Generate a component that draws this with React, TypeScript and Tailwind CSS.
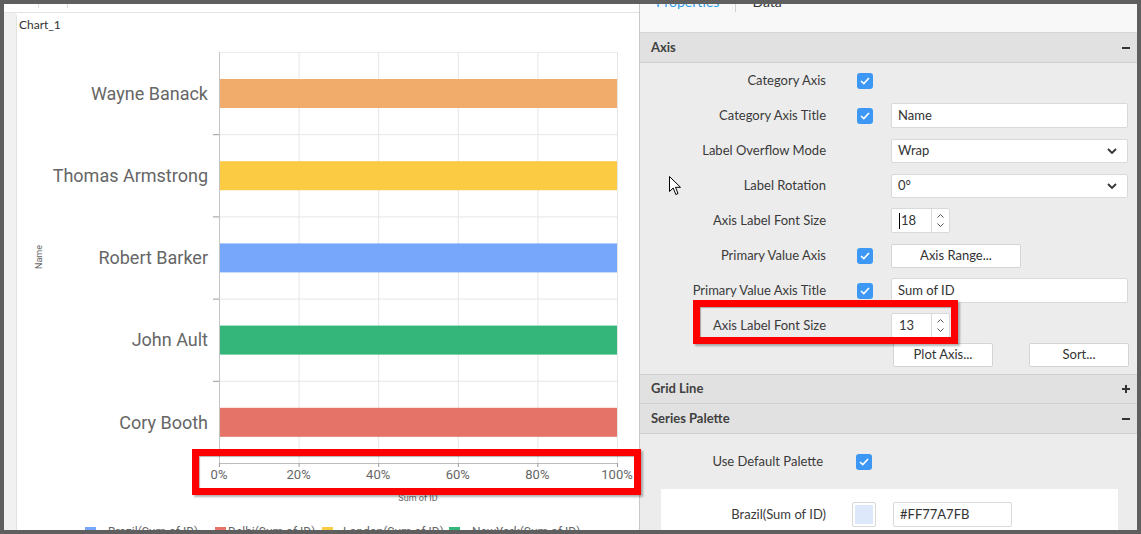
import React from 'react'

const panelFont = { fontFamily: 'Lato, "Noto Sans", sans-serif' }

const bars = [
  { name: 'Wayne Banack', color: '#F1AB6B' },
  { name: 'Thomas Armstrong', color: '#FBCB43' },
  { name: 'Robert Barker', color: '#77A7FB' },
  { name: 'John Ault', color: '#34B67A' },
  { name: 'Cory Booth', color: '#E57368' },
]

const legend = [
  { name: 'Brazil(Sum of ID)', color: '#77A7FB', x: 85, tx: 108 },
  { name: 'Delhi(Sum of ID)', color: '#E57368', x: 215, tx: 228 },
  { name: 'London(Sum of ID)', color: '#FBCB43', x: 322, tx: 343 },
  { name: 'NewYork(Sum of ID)', color: '#34B67A', x: 449, tx: 472 },
]

function Chart() {
  const left = 219
  const right = 617
  const top = 52
  const band = 82.2
  const step = (right - left) / 5
  return (
    <svg width="622" height="493" className="block">
      <g transform="translate(-17,-37)" style={{ fontFamily: 'Roboto, sans-serif' }}>
        <line x1={left} y1={top + 0.5} x2={right} y2={top + 0.5} stroke="#ececec" />
        {[0, 1, 2, 3, 4, 5].map((i) => (
          <line key={i} x1={left + i * step + 0.5} y1={top} x2={left + i * step + 0.5} y2={463} stroke="#e6e6e6" />
        ))}
        {[1, 2, 3, 4].map((i) => (
          <g key={i}>
            <line x1={left} y1={top + i * band + 0.5} x2={right} y2={top + i * band + 0.5} stroke="#e6e6e6" />
            <line x1={213} y1={top + i * band + 0.5} x2={left} y2={top + i * band + 0.5} stroke="#9a9a9a" />
          </g>
        ))}
        {bars.map((b, i) => (
          <g key={b.name}>
            <rect x={left} y={top + i * band + 27} width={right - left} height={29} fill={b.color} />
            <text x={208} y={top + i * band + 43} textAnchor="end" dominantBaseline="middle" fontSize="18" fill="#666">
              {b.name}
            </text>
          </g>
        ))}
        <line x1={left + 0.5} y1={top} x2={left + 0.5} y2={463} stroke="#c4c4c4" />
        <line x1={left} y1={463.5} x2={right} y2={463.5} stroke="#bdbdbd" />
        {[0, 1, 2, 3, 4, 5].map((i) => (
          <g key={i}>
            <line x1={left + i * step + 0.5} y1={463} x2={left + i * step + 0.5} y2={467} stroke="#9a9a9a" />
            <text x={left + i * step} y={476} textAnchor="middle" dominantBaseline="middle" fontSize="13" fill="#666">
              {i * 20}%
            </text>
          </g>
        ))}
        <text x={418} y={499} textAnchor="middle" dominantBaseline="middle" fontSize="9" fill="#666">
          Sum of ID
        </text>
        <text x={40} y={257} textAnchor="middle" dominantBaseline="middle" fontSize="9" fill="#666" transform="rotate(-90 40 257)">
          Name
        </text>
        {legend.map((l) => (
          <g key={l.name}>
            <rect x={l.x} y={527} width={11} height={11} fill={l.color} />
            <text x={l.tx} y={527} dominantBaseline="hanging" fontSize="12" fill="#666">
              {l.name}
            </text>
          </g>
        ))}
      </g>
    </svg>
  )
}

function Check() {
  return (
    <div className="w-[16px] h-[16px] rounded-[3px] bg-[#3d97f5] flex items-center justify-center">
      <svg width="10" height="8" viewBox="0 0 10 8">
        <path d="M1 4 L3.8 6.6 L9 1" fill="none" stroke="white" strokeWidth="1.6" />
      </svg>
    </div>
  )
}

function Header({ title, sign, top }: { title: string; sign: 'minus' | 'plus'; top?: boolean }) {
  return (
    <div
      className={`h-[30px] bg-[#e1e1e1] border-b border-[#d0d0d0] flex items-center justify-between pl-[11px] pr-[7px] ${
        top ? 'border-t' : ''
      }`}
    >
      <span className="text-[13px] font-bold text-[#404040]">{title}</span>
      <div className="relative w-[8px] h-[8px] flex items-center justify-center">
        <div className="w-[8px] h-[2px] bg-[#333]" />
        {sign === 'plus' && <div className="absolute w-[2px] h-[8px] bg-[#333]" />}
      </div>
    </div>
  )
}

function Row({ label, check, children }: { label: string; check?: boolean; children?: React.ReactNode }) {
  return (
    <div className="h-[35px] flex items-center">
      <div className="w-[186px] text-right text-[13px] text-[#3a3a3a]">{label}</div>
      <div className="w-[16px] ml-[31px]">{check && <Check />}</div>
      <div className="ml-[18px] w-[237px]">{children}</div>
    </div>
  )
}

function TextBox({ value }: { value: string }) {
  return (
    <div className="h-[25px] bg-white border border-[#d9d9d9] rounded-[2px] flex items-center px-[6px] text-[13px] text-[#333]">
      {value}
    </div>
  )
}

function Select({ value }: { value: string }) {
  return (
    <div className="h-[24px] bg-white border border-[#d9d9d9] rounded-[2px] flex items-center justify-between px-[6px] pr-[10px] text-[13px] text-[#333]">
      <span>{value}</span>
      <svg width="10" height="6" viewBox="0 0 10 6">
        <path d="M1 1 L5 5 L9 1" fill="none" stroke="#333" strokeWidth="1.8" />
      </svg>
    </div>
  )
}

function Spinner({ value, caret }: { value: string; caret?: boolean }) {
  return (
    <div className="w-[59px] h-[25px] bg-white border border-[#d9d9d9] rounded-[2px] flex items-center text-[13px] text-[#333]">
      <div className="flex-1 flex items-center pl-[7px]">
        {caret && <span className="w-px h-[16px] bg-black mr-[1px]" />}
        {value}
      </div>
      <div className="w-[18px] h-full border-l border-[#d9d9d9] flex flex-col items-center justify-center gap-[5px]">
        <svg width="7" height="4" viewBox="0 0 7 4">
          <path d="M0.5 3.5 L3.5 0.5 L6.5 3.5" fill="none" stroke="#555" strokeWidth="1" />
        </svg>
        <svg width="7" height="4" viewBox="0 0 7 4">
          <path d="M0.5 0.5 L3.5 3.5 L6.5 0.5" fill="none" stroke="#555" strokeWidth="1" />
        </svg>
      </div>
    </div>
  )
}

function Button({ label, w }: { label: string; w: string }) {
  return (
    <div className={`${w} h-[24px] bg-white border border-[#d4d4d4] rounded-[2px] flex items-center justify-center text-[13px] text-[#333]`}>
      {label}
    </div>
  )
}

export default function App() {
  return (
    <div className="relative w-[1141px] h-[534px] bg-[#5f5f5f] p-[4px] overflow-hidden" style={panelFont}>
      <div className="flex h-full">
        {/* chart side */}
        <div className="w-[635px] h-full bg-white flex flex-col overflow-hidden">
          <div className="h-[9px] border-b border-[#e3e3e3] flex">
            <div className="ml-[34px] w-px h-[4px] bg-[#dcdcdc]" />
            <div className="ml-[28px] w-px h-[4px] bg-[#dcdcdc]" />
          </div>
          <div className="flex flex-1">
            <div className="w-[13px] bg-[#f1f1f1] border-r border-[#e2e2e2] rounded-tr-[4px]" />
            <div className="flex-1 flex flex-col">
              <div className="h-[24px] leading-[24px] pl-[2px] text-[12px] text-[#333]" style={{ fontFamily: 'Lato, sans-serif' }}>
                Chart_1
              </div>
              <Chart />
            </div>
          </div>
        </div>
        <div className="w-px h-full bg-[#c9c9c9]" />
        {/* properties side */}
        <div className="flex-1 h-full bg-[#ececec] flex flex-col overflow-hidden">
          <div className="h-[29px] bg-[#f8f8f8] border-b border-[#d6d6d6] flex items-start pl-[16px] overflow-hidden">
            <span className="-mt-[12px] text-[14px] leading-[20px] text-[#2d9ae8]">Properties</span>
            <div className="ml-[16px] w-px h-[8px] bg-[#cfcfcf]" />
            <span className="ml-[16px] -mt-[12px] text-[14px] leading-[20px] text-[#333]">Data</span>
          </div>
          <Header title="Axis" sign="minus" />
          <div className="flex flex-col">
            <Row label="Category Axis" check />
            <Row label="Category Axis Title" check>
              <TextBox value="Name" />
            </Row>
            <Row label="Label Overflow Mode">
              <Select value="Wrap" />
            </Row>
            <Row label="Label Rotation">
              <Select value="0°" />
            </Row>
            <Row label="Axis Label Font Size">
              <Spinner value="18" caret />
            </Row>
            <Row label="Primary Value Axis" check>
              <Button label="Axis Range..." w="w-[130px]" />
            </Row>
            <Row label="Primary Value Axis Title" check>
              <TextBox value="Sum of ID" />
            </Row>
            <Row label="Axis Label Font Size">
              <Spinner value="13" />
            </Row>
            <div className="h-[24px] flex mb-[7px]">
              <div className="ml-[253px] w-[236px] flex justify-between">
                <Button label="Plot Axis..." w="w-[100px]" />
                <Button label="Sort..." w="w-[100px]" />
              </div>
            </div>
          </div>
          <Header title="Grid Line" sign="plus" top />
          <Header title="Series Palette" sign="minus" />
          <div className="h-[35px] mt-[10px] flex items-center">
            <div className="w-[183px] text-right text-[13px] text-[#3a3a3a]">Use Default Palette</div>
            <div className="ml-[33px]">
              <Check />
            </div>
          </div>
          <div className="mt-[10px] ml-[21px] w-[457px] flex-1 bg-white pt-[13px]">
            <div className="flex items-center">
              <div className="w-[165px] text-right text-[13px] text-[#3a3a3a]">Brazil(Sum of ID)</div>
              <div className="ml-[26px] w-[24px] h-[25px] border border-[#d8d8d8] rounded-[2px] p-[2px] bg-white">
                <div className="w-full h-full bg-[#dde8fb]" />
              </div>
              <div className="ml-[17px] w-[119px]">
                <TextBox value="#FF77A7FB" />
              </div>
            </div>
          </div>
        </div>
      </div>

      {/* annotation boxes */}
      <div className="absolute left-[192px] top-[449px] w-[449px] h-[46px] border-[7px] border-[#ff0000] shadow-[inset_1px_1px_1px_rgba(0,0,0,0.3),2px_2px_2px_rgba(0,0,0,0.3)]" />
      <div className="absolute left-[693px] top-[300px] w-[265px] h-[44px] border-[7px] border-[#ff0000] shadow-[inset_1px_1px_1px_rgba(0,0,0,0.3),2px_2px_2px_rgba(0,0,0,0.3)]" />

      {/* mouse pointer */}
      <svg className="absolute left-[669px] top-[176px]" width="13" height="20" viewBox="0 0 13 20">
        <path d="M0.5 0.5 L0.5 15.5 L4.2 12 L6.8 18.5 L9 17.5 L6.5 11.3 L11.5 11.3 Z" fill="white" stroke="black" strokeWidth="1" />
      </svg>
    </div>
  )
}
